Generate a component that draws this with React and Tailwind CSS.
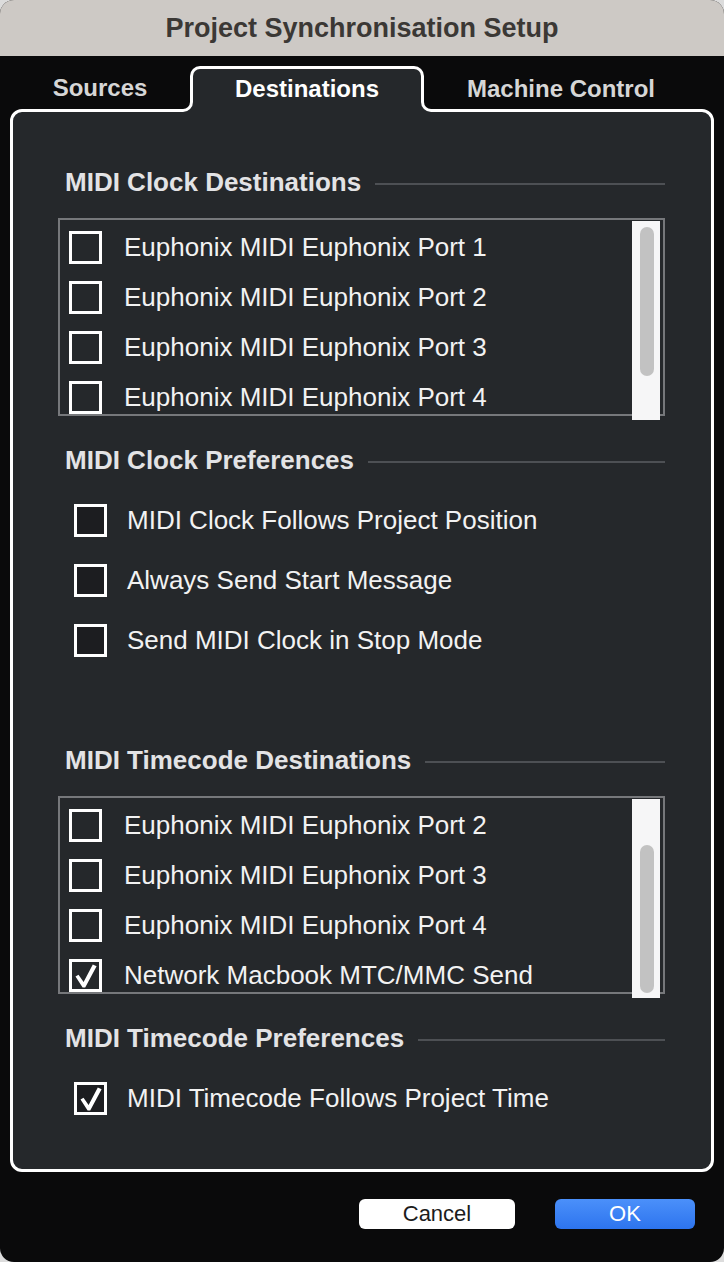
import React from "react";

function Check() {
  return (
    <svg viewBox="0 0 27 27" className="w-full h-full">
      <path d="M3.5 14.5 L6.5 12.8 L11.6 20 L20.8 2.5 L24.6 4.2 L13.2 25.5 L10.6 25.5 Z" fill="#ffffff" />
    </svg>
  );
}

function Box({ checked, dark, className }) {
  return (
    <div
      className={
        "w-[33px] h-[33px] flex-none border-[3px] border-white " +
        (dark ? "bg-[#1c1d20] " : "bg-transparent ") +
        (className || "")
      }
    >
      {checked ? <Check /> : null}
    </div>
  );
}

function Header({ children, className }) {
  return (
    <div className={"flex items-center h-[26px] pl-[7px] " + (className || "")}>
      <span className="text-[26px] font-bold text-[#e3e3e5] leading-[26px] whitespace-nowrap">{children}</span>
      <div className="flex-1 h-[2px] bg-[#4d5054] ml-[14px] mt-[3px]" />
    </div>
  );
}

function ListBox({ items, thumbTop, thumbH, className }) {
  return (
    <div className={"h-[198px] border-2 border-[#76787b] flex " + (className || "")}>
      <div className="flex-1 overflow-hidden pt-[2px]">
        {items.map((it, i) => (
          <div key={i} className="h-[50px] flex items-center pl-[9px]">
            <Box checked={it.checked} />
            <span className="ml-[22px] text-[26px] text-[#f2f2f2] whitespace-nowrap leading-none">{it.label}</span>
          </div>
        ))}
      </div>
      <div className="w-[28px] mr-[3px] mt-[1px] mb-[-6px] bg-[#f6f6f7] relative flex-none">
        <div
          className="absolute left-[8px] w-[14px] rounded-full bg-[#c2c2c2]"
          style={{ top: thumbTop, height: thumbH }}
        />
      </div>
    </div>
  );
}

function PrefRow({ label, checked }) {
  return (
    <div className="h-[60px] flex items-center pl-[16px]">
      <Box checked={checked} dark />
      <span className="ml-[20px] text-[26px] text-[#f2f2f2] whitespace-nowrap leading-none">{label}</span>
    </div>
  );
}

export default function App() {
  return (
    <div className="w-[724px] h-[1262px] bg-[#dcdcdc] font-['Liberation_Sans',Arial,sans-serif]">
      <div className="w-[724px] h-[1262px] rounded-[14px] overflow-hidden bg-[#0a0a0b] flex flex-col">
        {/* Title bar */}
        <div className="h-[56px] flex-none bg-[#cdc9c5] flex items-center justify-center">
          <span className="text-[27px] font-bold text-[#3b3835] leading-none">Project Synchronisation Setup</span>
        </div>

        {/* Tabs */}
        <div className="flex items-end px-[10px] pt-[10px] flex-none">
          <div className="w-[180px] h-[43px] flex items-center justify-center text-[24px] font-bold text-[#d6d6d6] leading-none">
            Sources
          </div>
          <div className="relative z-10 w-[234px] h-[46px] mb-[-3px] border-[3px] border-b-0 border-white rounded-t-[10px] bg-[#25282b] flex items-center justify-center pb-[3px]">
            <span className="text-[24px] font-bold text-white leading-none">Destinations</span>
            <div className="absolute left-[-14px] bottom-0 w-[14px] h-[14px] bg-[#25282b]">
              <div className="w-full h-full bg-[#0a0a0b] border-r-[3px] border-b-[3px] border-white rounded-br-[10px]" />
            </div>
            <div className="absolute right-[-14px] bottom-0 w-[14px] h-[14px] bg-[#25282b]">
              <div className="w-full h-full bg-[#0a0a0b] border-l-[3px] border-b-[3px] border-white rounded-bl-[10px]" />
            </div>
          </div>
          <div className="flex-1 h-[43px] flex items-center justify-center pr-[16px] pt-[2px] text-[24px] font-bold text-[#d6d6d6] leading-none">
            Machine Control
          </div>
        </div>

        {/* Panel */}
        <div className="mx-[10px] h-[1063px] flex-none border-[3px] border-white rounded-[12px] bg-[#25282b] pl-[45px] pr-[46px] pt-[57px]">
          <Header>MIDI Clock Destinations</Header>
          <ListBox
            className="mt-[23px]"
            thumbTop={6}
            thumbH={149}
            items={[
              { label: "Euphonix MIDI Euphonix Port 1" },
              { label: "Euphonix MIDI Euphonix Port 2" },
              { label: "Euphonix MIDI Euphonix Port 3" },
              { label: "Euphonix MIDI Euphonix Port 4" },
            ]}
          />

          <Header className="mt-[31px]">MIDI Clock Preferences</Header>
          <div className="mt-[17px]">
            <PrefRow label="MIDI Clock Follows Project Position" />
            <PrefRow label="Always Send Start Message" />
            <PrefRow label="Send MIDI Clock in Stop Mode" />
          </div>

          <Header className="mt-[77px]">MIDI Timecode Destinations</Header>
          <ListBox
            className="mt-[23px]"
            thumbTop={46}
            thumbH={148}
            items={[
              { label: "Euphonix MIDI Euphonix Port 2" },
              { label: "Euphonix MIDI Euphonix Port 3" },
              { label: "Euphonix MIDI Euphonix Port 4" },
              { label: "Network Macbook MTC/MMC Send", checked: true },
            ]}
          />

          <Header className="mt-[31px]">MIDI Timecode Preferences</Header>
          <div className="mt-[17px]">
            <PrefRow label="MIDI Timecode Follows Project Time" checked />
          </div>
        </div>

        {/* Buttons */}
        <div className="flex justify-end gap-[40px] pr-[29px] mt-[27px]">
          <button className="w-[156px] h-[30px] rounded-[6px] bg-white text-[22px] text-[#1c1c1c] leading-none flex items-center justify-center">
            Cancel
          </button>
          <button className="w-[140px] h-[30px] rounded-[6px] bg-linear-to-b from-[#4b90fa] to-[#2d74ee] text-[22px] text-white leading-none flex items-center justify-center">
            OK
          </button>
        </div>
      </div>
    </div>
  );
}
